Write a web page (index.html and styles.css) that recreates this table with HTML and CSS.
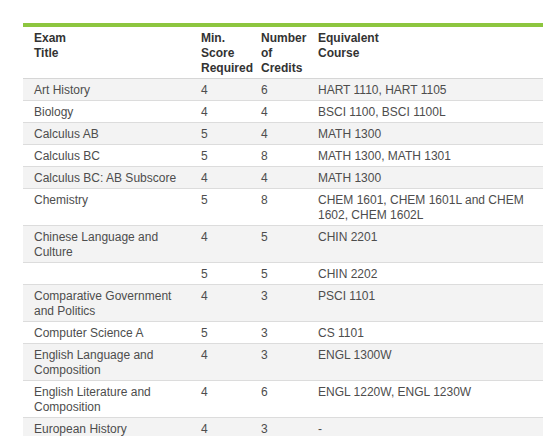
FILE: index.html
```html
<!DOCTYPE html>
<html>
<head>
<meta charset="utf-8">
<link rel="stylesheet" href="styles.css">
</head>
<body>
<table class="exams">
  <colgroup>
    <col class="c1"><col class="c2"><col class="c3"><col class="c4">
  </colgroup>
  <thead>
    <tr><th>Exam<br>Title</th><th>Min.<br>Score<br>Required</th><th>Number<br>of<br>Credits</th><th>Equivalent<br>Course</th></tr>
  </thead>
  <tbody>
    <tr><td>Art History</td><td>4</td><td>6</td><td>HART 1110, HART 1105</td></tr>
    <tr><td>Biology</td><td>4</td><td>4</td><td>BSCI 1100, BSCI 1100L</td></tr>
    <tr><td>Calculus AB</td><td>5</td><td>4</td><td>MATH 1300</td></tr>
    <tr><td>Calculus BC</td><td>5</td><td>8</td><td>MATH 1300, MATH 1301</td></tr>
    <tr><td>Calculus BC: AB Subscore</td><td>4</td><td>4</td><td>MATH 1300</td></tr>
    <tr><td>Chemistry</td><td>5</td><td>8</td><td>CHEM 1601, CHEM 1601L and CHEM 1602, CHEM 1602L</td></tr>
    <tr><td>Chinese Language and Culture</td><td>4</td><td>5</td><td>CHIN 2201</td></tr>
    <tr><td></td><td>5</td><td>5</td><td>CHIN 2202</td></tr>
    <tr><td>Comparative Government and Politics</td><td>4</td><td>3</td><td>PSCI 1101</td></tr>
    <tr><td>Computer Science A</td><td>5</td><td>3</td><td>CS 1101</td></tr>
    <tr><td>English Language and Composition</td><td>4</td><td>3</td><td>ENGL 1300W</td></tr>
    <tr><td>English Literature and Composition</td><td>4</td><td>6</td><td>ENGL 1220W, ENGL 1230W</td></tr>
    <tr><td>European History</td><td>4</td><td>3</td><td>-</td></tr>
  </tbody>
</table>
</body>
</html>
```
FILE: styles.css
```css
html, body {
  margin: 0;
  padding: 0;
  background: #ffffff;
}
body {
  padding: 23px 0 0 23px;
  font-family: "Liberation Sans", Arial, sans-serif;
  font-size: 12px;
  line-height: 15px;
  color: #4d4d4d;
}
.exams {
  width: 520px;
  border-collapse: collapse;
  border-top: 4px solid #8dc63f;
  table-layout: fixed;
}
.c1 { width: 168px; }
.c2 { width: 60px; }
.c3 { width: 57px; }
.c4 { width: 235px; }
.exams th {
  text-align: left;
  vertical-align: top;
  font-weight: bold;
  color: #333333;
  padding: 4px 10px 2px 10px;
  border-bottom: 1px solid #d6d6d6;
}
.exams th:first-child { padding-left: 11px; }
.exams td {
  vertical-align: top;
  padding: 4px 10px 2px 10px;
  border-bottom: 1px solid #dcdcdc;
}
.exams td:first-child { padding-left: 11px; }
.exams tbody tr:nth-child(odd) { background: #f3f3f3; }
.exams tbody tr:nth-child(even) { background: #ffffff; }
```
